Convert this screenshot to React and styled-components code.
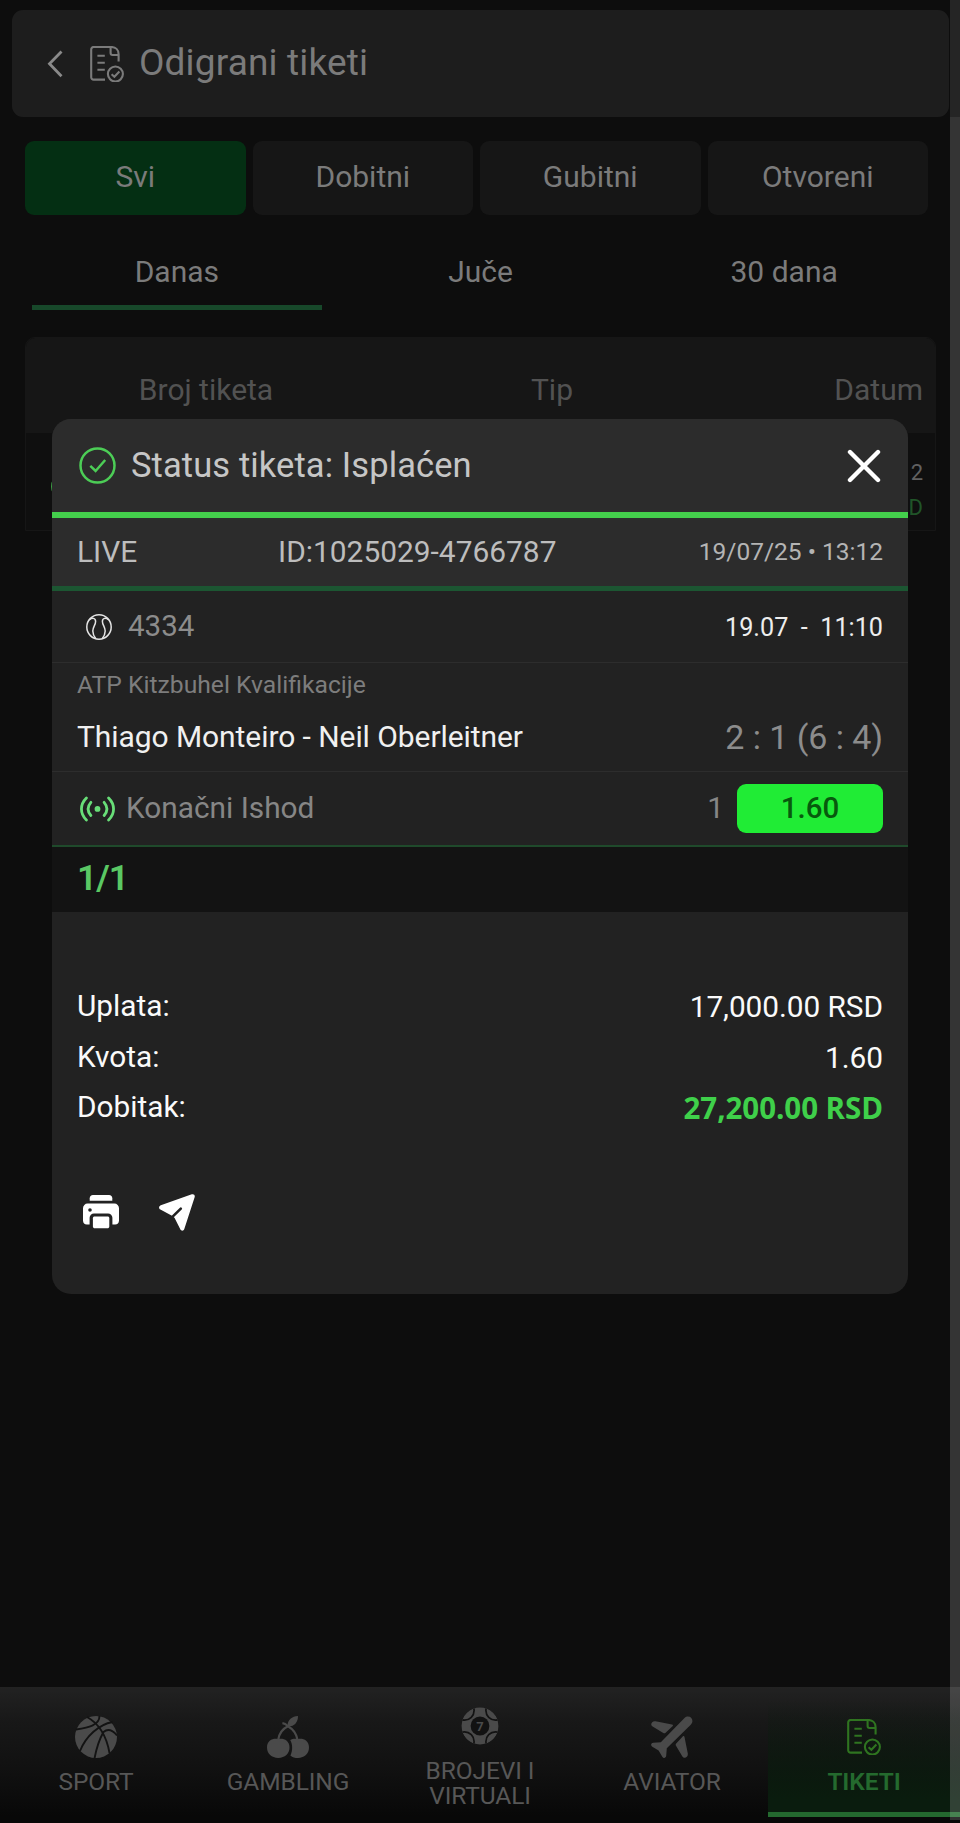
import React, { useState } from "react";
import styled, { createGlobalStyle, ThemeProvider } from "styled-components";

const theme = {
  page: "#0d0d0d",
  panel: "#1d1d1d",
  tile: "#161616",
  dimText: "#7b7b7b",
  headText: "#525252",
  green: "#44cf4c",
  darkGreen: "#1c5632",
  font: `Roboto, "Liberation Sans", sans-serif`,
};

const filters = ["Svi", "Dobitni", "Gubitni", "Otvoreni"];
const ranges = ["Danas", "Juče", "30 dana"];

const TicketIcon = () => (
  <svg width="34" height="36" viewBox="0 0 34 36" fill="none" stroke="currentColor" strokeWidth="2.1">
    <path d="M15 33.6H3.6a2.4 2.4 0 0 1-2.4-2.4V3.4A2.4 2.4 0 0 1 3.6 1h17.6c4.4 0 7.4 3 7.4 7.2v7.3" />
    <path d="M20.6 1v6a2 2 0 0 0 2 2h6" />
    <path d="M7.4 9.7h7.4M7.4 16.7h7.4M7.4 23.7h7.4" />
    <circle cx="25.4" cy="28" r="7.5" />
    <path d="M21.6 28.2l2.8 2.5 5-5.2" />
  </svg>
);

const CheckCircle = () => (
  <svg width="37" height="37" viewBox="0 0 37 37" fill="none" stroke="#4ccd56" strokeWidth="2.5">
    <circle cx="18.5" cy="18.5" r="17" />
    <path d="M11.3 18.8l5.3 5.2L26.2 13" />
  </svg>
);

const TennisIcon = () => (
  <svg width="26" height="26" viewBox="0 0 26 26" fill="none" stroke="#e4e4e4" strokeWidth="1.5">
    <circle cx="13" cy="13" r="12.2" />
    <path d="M3.2 6C6 3.6 9.6 3.6 9.6 7.4c0 3.4-2.8 5.8-2.8 9.6 0 3 1.4 5.6 3 7.8" />
    <path d="M22.8 6c-2.8-2.4-6.4-2.4-6.4 1.4 0 3.4 2.8 5.8 2.8 9.6 0 3-1.4 5.6-3 7.8" />
  </svg>
);

const LiveIcon = () => (
  <svg width="35" height="26" viewBox="0 0 35 26" fill="none" stroke="#68de78" strokeWidth="2.8" strokeLinecap="round">
    <path d="M6.4 1.9C-.2 8.4-.2 17.4 6.4 23.9M28.6 1.9c6.6 6.5 6.6 15.5 0 22" />
    <path d="M10.9 6.3c-3.6 4.2-3.6 9 0 13.2M24.1 6.3c3.6 4.2 3.6 9 0 13.2" />
    <circle cx="17.5" cy="12.9" r="2.9" fill="#68de78" stroke="none" />
  </svg>
);

const PrinterIcon = () => (
  <svg width="36" height="34" viewBox="0 0 36 34" fill="#fff">
    <path d="M6.7 5.8V3.2C6.7 1.4 8 0 9.9 0h16.2c1.9 0 3.2 1.4 3.2 3.2v2.6z" />
    <path
      fillRule="evenodd"
      d="M4.6 8.6h26.8a4.6 4.6 0 0 1 4.6 4.6v12.2c0 2.5-1.6 4-3.8 4h-2.8v-6.6a4.4 4.4 0 0 0-4.4-4.4H11a4.4 4.4 0 0 0-4.4 4.4v6.6H3.8c-2.2 0-3.8-1.5-3.8-4V13.2a4.6 4.6 0 0 1 4.6-4.6zM7 13.2a1.8 1.8 0 1 0 0 3.6 1.8 1.8 0 0 0 0-3.6z"
    />
    <path d="M9.9 23.2c0-.9.7-1.6 1.6-1.6h13.2c.9 0 1.6.7 1.6 1.6v8.2c0 1.1-.8 1.9-1.9 1.9H11.8c-1.1 0-1.9-.8-1.9-1.9z" />
  </svg>
);

const SendIcon = () => (
  <svg width="36" height="37" viewBox="0 0 36 37">
    <path
      fill="#fff"
      d="M1.8 11.2 32.8.3c2-.6 3.3.7 2.9 2.7L25.3 35c-.7 2.2-3 2.3-4 .3l-5.8-11.6-3-2.2L1.4 15.6c-1.9-.9-1.8-3.5.4-4.4z"
    />
    <path d="M12.6 23.6 21.8 14.6" stroke="#222" strokeWidth="2.6" strokeLinecap="round" />
  </svg>
);

const BallIcon = () => (
  <svg width="42" height="42" viewBox="0 0 42 42">
    <circle cx="21" cy="21" r="21" fill="#4a4a4a" />
    <g fill="none" stroke="#131313" strokeWidth="1.9">
      <path d="M12 1C22 6.5 31 17 34.5 37" />
      <path d="M24.5 0C24.5 9.5 13 11.5 1 13.5" />
      <path d="M37.5 6C24 8.5 11 20 5 35" />
      <path d="M42 19.5C37 13.5 32.5 12.8 28.5 16 24.5 23 21.5 32 19.6 42" />
    </g>
  </svg>
);

const CherryIcon = () => (
  <svg width="42" height="42" viewBox="0 0 42 42" fill="#4a4a4a">
    <path d="M20.4 10.5C20.4 3.5 25 .4 31 0c.2 6-3.8 11-10.6 10.5z" />
    <path
      d="M15.4 7.2c2 .3 3.8 1.3 5.6 3-5.6 2.6-9 7-9.9 14M21 10.2c5 2.9 8.6 7.3 9.6 14"
      fill="none"
      stroke="#4a4a4a"
      strokeWidth="2.2"
    />
    <path d="M11.2 23.2c4.2-1.2 11.3.4 11.3 8.4 0 6-4.6 10.4-11.2 10.4S0 37.6 0 31.6c0-8 7-9.6 11.2-8.4z" />
    <path d="M30.8 23.2C35 22 42 23.600 42 31.600 42 37.600 37.400 42 31 42c-3 0-5.600-.8-7.600-2.600 2.400-4.400 2.400-11.200-.2-15.400 2.200-1.200 5.200-1.600 7.600-.8z" />
  </svg>
);

const ChipIcon = () => (
  <svg width="38" height="38" viewBox="0 0 38 38">
    <clipPath id="chip">
      <circle cx="19" cy="19" r="18.4" />
    </clipPath>
    <g clipPath="url(#chip)" fill="#4a4a4a" stroke="#121212" strokeWidth="1.7">
      <rect width="38" height="38" stroke="none" />
      <circle cx="3.5" cy="3.5" r="9.6" />
      <circle cx="34.5" cy="3.5" r="9.6" />
      <circle cx="3.5" cy="34.5" r="9.6" />
      <circle cx="34.5" cy="34.5" r="9.6" />
    </g>
    <circle cx="19" cy="19" r="9.4" fill="#121212" />
    <text x="19" y="23.6" textAnchor="middle" fontFamily="Roboto, sans-serif" fontSize="13" fontWeight="700" fill="#4a4a4a">
      7
    </text>
  </svg>
);

const AirplaneIcon = () => (
  <svg width="42" height="42" viewBox="0 0 42 42" fill="#4a4a4a">
    <path d="M33.500 2C38.300-2.200 44.200 3.700 40 8.500L15.800 32.200l-.6 7.600c-.2 2.200-2.700 2.900-3.900.9l-3.700-6.300-6.300-3.700c-2-1.200-1.300-3.700.9-3.900l7.600-.6z" />
    <path d="M4.500 5.200 21 8.500c1 .2 1.300 1 .5 1.800L14.600 16.800c-.8.7-1.5.7-2.300.2L1.600 10.600C-1.300 8.800.8 4.600 4.500 5.200z" />
    <path d="M36.800 37.500 33.500 21c-.2-1-1-1.300-1.800-.5l-6.500 6.900c-.7.8-.7 1.5-.2 2.300l6.400 10.700c1.800 2.900 6 .8 5.400-2.900z" />
  </svg>
);

const navItems = [
  { label: "SPORT", icon: <BallIcon /> },
  { label: "GAMBLING", icon: <CherryIcon /> },
  { label: "BROJEVI I VIRTUALI", icon: <ChipIcon />, tall: true },
  { label: "AVIATOR", icon: <AirplaneIcon /> },
  { label: "TIKETI", icon: <TicketIcon />, active: true },
];

const summary = [
  { label: "Uplata:", value: "17,000.00 RSD" },
  { label: "Kvota:", value: "1.60" },
  { label: "Dobitak:", value: "27,200.00 RSD", win: true },
];

const App = () => {
  const [filter, setFilter] = useState("Svi");
  const [range, setRange] = useState("Danas");
  const [open, setOpen] = useState(true);

  return (
    <ThemeProvider theme={theme}>
      <GlobalStyle />
      <Page>
        <Content>
          <Header>
            <svg width="16" height="28" viewBox="0 0 16 28" fill="none" stroke="#8a8a8a" strokeWidth="2.8">
              <path d="M14.5 1.5 2.5 13.8l12 12.4" />
            </svg>
            <TicketIcon />
            <Title>Odigrani tiketi</Title>
          </Header>
          <Filters>
            {filters.map((name) => (
              <FilterButton key={name} $active={name === filter} onClick={() => setFilter(name)}>
                {name}
              </FilterButton>
            ))}
          </Filters>
          <Ranges>
            {ranges.map((name) => (
              <RangeTab key={name} $active={name === range} onClick={() => setRange(name)}>
                {name}
              </RangeTab>
            ))}
          </Ranges>
          <Table>
            <TableHead>
              <span>Broj tiketa</span>
              <span>Tip</span>
              <span>Datum</span>
            </TableHead>
            <TableRow>
              <CheckCircle />
              <RowInfo>
                <span>2</span>
                <RowWin>D</RowWin>
              </RowInfo>
            </TableRow>
          </Table>
        </Content>
        <BottomNav>
          {navItems.map(({ label, icon, active, tall }) => (
            <NavItem key={label} $active={active}>
              <NavIcon $tall={tall}>{icon}</NavIcon>
              <NavLabel $active={active}>{label}</NavLabel>
            </NavItem>
          ))}
        </BottomNav>
        {open && (
          <Modal>
            <ModalHeader>
              <CheckCircle />
              <ModalTitle>Status tiketa: Isplaćen</ModalTitle>
              <CloseButton onClick={() => setOpen(false)}>
                <svg width="34" height="34" viewBox="0 0 34 34" stroke="#fff" strokeWidth="4.4" strokeLinecap="round">
                  <path d="M3 3l28 28M31 3L3 31" />
                </svg>
              </CloseButton>
            </ModalHeader>
            <IdRow>
              <span>LIVE</span>
              <span>ID:1025029-4766787</span>
              <DateText>19/07/25 • 13:12</DateText>
            </IdRow>
            <EventRow>
              <TennisIcon />
              <Code>4334</Code>
              <EventDate>19.07&nbsp; -&nbsp; 11:10</EventDate>
            </EventRow>
            <Match>
              <League>ATP Kitzbuhel Kvalifikacije</League>
              <Players>
                <span>Thiago Monteiro - Neil Oberleitner</span>
                <Score>2 : 1 (6 : 4)</Score>
              </Players>
            </Match>
            <BetRow>
              <LiveIcon />
              <BetName>Konačni Ishod</BetName>
              <Pick>1</Pick>
              <Odd>1.60</Odd>
            </BetRow>
            <Count>1/1</Count>
            <Summary>
              {summary.map(({ label, value, win }) => (
                <SummaryRow key={label}>
                  <span>{label}</span>
                  <SummaryValue $win={win}>{value}</SummaryValue>
                </SummaryRow>
              ))}
            </Summary>
            <Actions>
              <PrinterIcon />
              <SendIcon />
            </Actions>
          </Modal>
        )}
        <ScrollTrack>
          <ScrollThumb />
        </ScrollTrack>
      </Page>
    </ThemeProvider>
  );
};

export default App;

const GlobalStyle = createGlobalStyle`
  * {
    box-sizing: border-box;
  }
  body {
    margin: 0;
    background: ${theme.page};
    font-family: ${theme.font};
  }
  svg {
    display: block;
    flex-shrink: 0;
  }
`;

const Page = styled.div`
  position: relative;
  display: flex;
  flex-direction: column;
  width: 960px;
  height: 1823px;
  overflow: hidden;
  background: ${(props) => props.theme.page};
  color: ${(props) => props.theme.dimText};
`;

const Content = styled.div`
  flex: 1;
  padding: 10px 11px 0 12px;
`;

const Header = styled.div`
  display: flex;
  align-items: center;
  height: 107px;
  padding: 0 36px 0 35px;
  gap: 27px;
  border-radius: 11px;
  background: ${(props) => props.theme.panel};
`;

const Title = styled.h1`
  margin: 0 0 0 -12px;
  padding-bottom: 2px;
  font-size: 37px;
  font-weight: 400;
  letter-spacing: 0.15px;
`;

const Filters = styled.div`
  display: grid;
  grid-template-columns: repeat(4, 1fr);
  gap: 7px;
  padding: 24px 21px 0 13px;
`;

const FilterButton = styled.button`
  height: 74px;
  padding: 0 0 3px;
  border: none;
  border-radius: 9px;
  background: ${(props) => (props.$active ? "#042f13" : props.theme.tile)};
  color: inherit;
  font-family: inherit;
  font-size: 30px;
`;

const Ranges = styled.div`
  display: grid;
  grid-template-columns: repeat(3, 1fr);
  height: 95px;
  padding: 0 13px;
`;

const RangeTab = styled.div`
  height: 95px;
  margin: 0 7px;
  padding-top: 18px;
  border-bottom: 5px solid ${(props) => (props.$active ? "#17482a" : "transparent")};
  font-size: 30px;
  line-height: 77px;
  text-align: center;
`;

const Table = styled.div`
  margin: 27px 13px 0 13px;
  border: 1px solid ${(props) => props.theme.tile};
  border-radius: 10px 10px 0 0;
`;

const TableHead = styled.div`
  display: grid;
  grid-template-columns: 360px 1fr 210px;
  align-items: center;
  height: 95px;
  padding: 7px 12px 0 0;
  border-radius: 9px 9px 0 0;
  background: ${(props) => props.theme.tile};
  color: ${(props) => props.theme.headText};
  font-size: 30px;
  text-align: center;
  span:nth-child(2) {
    padding-left: 5px;
  }
  span:last-child {
    text-align: right;
  }
`;

const TableRow = styled.div`
  display: flex;
  align-items: center;
  justify-content: space-between;
  height: 97px;
  padding: 10px 12px 0 25px;
  background: #0f0f0f;
`;

const RowInfo = styled.div`
  display: flex;
  flex-direction: column;
  padding-top: 6px;
  font-size: 22px;
  line-height: 35px;
  text-align: right;
  color: #616161;
`;

const RowWin = styled.span`
  color: #205428;
`;

const BottomNav = styled.div`
  display: grid;
  grid-template-columns: repeat(5, 192px);
  height: 136px;
  padding-bottom: 6px;
  background: linear-gradient(#222, #181818 25%, #111 60%, #080808 95%);
`;

const NavItem = styled.div`
  display: flex;
  flex-direction: column;
  align-items: center;
  justify-content: center;
  padding-top: 10px;
  border-bottom: 5px solid ${(props) => (props.$active ? "#24692f" : "transparent")};
  background: ${(props) => (props.$active ? "linear-gradient(transparent 10%, #0a1c0e 90%)" : "none")};
  color: ${(props) => (props.$active ? "#2f7420" : "#4a4a4a")};
`;

const NavIcon = styled.div`
  display: flex;
  align-items: center;
  justify-content: center;
  height: ${(props) => (props.$tall ? "38px" : "42px")};
  margin-top: ${(props) => (props.$tall ? "5px" : "0")};
  margin-bottom: ${(props) => (props.$tall ? "13px" : "11px")};
`;

const NavLabel = styled.span`
  max-width: 150px;
  color: ${(props) => (props.$active ? "#246a2e" : "#575757")};
  font-size: 24.5px;
  font-weight: ${(props) => (props.$active ? 600 : 400)};
  line-height: 25px;
  text-align: center;
  letter-spacing: -0.1px;
`;

const Modal = styled.div`
  position: absolute;
  top: 419px;
  left: 52px;
  width: 856px;
  height: 875px;
  overflow: hidden;
  border-radius: 19px;
  background: #222;
`;

const ModalHeader = styled.div`
  display: flex;
  align-items: center;
  height: 99px;
  padding: 0 27px;
  border-bottom: 6px solid ${(props) => props.theme.green};
  background: #2c2c2c;
  color: #c6c6c6;
`;

const ModalTitle = styled.h2`
  flex: 1;
  margin: 0 0 0 15px;
  padding-bottom: 1px;
  font-size: 34.5px;
  font-weight: 400;
  letter-spacing: 0.1px;
`;

const CloseButton = styled.button`
  padding: 0;
  border: none;
  background: none;
`;

const IdRow = styled.div`
  display: grid;
  grid-template-columns: 201px 1fr auto;
  align-items: center;
  height: 73px;
  padding: 0 25px 2px;
  border-bottom: 5px solid ${(props) => props.theme.darkGreen};
  background: #2c2c2c;
  color: #bdbdbd;
  font-size: 29.9px;
`;

const DateText = styled.span`
  padding-top: 1px;
  color: #b4b4b4;
  font-size: 24.5px;
`;

const EventRow = styled.div`
  display: flex;
  align-items: center;
  height: 72px;
  padding: 0 25px 0 34px;
  border-bottom: 1px solid #2d2d2d;
`;

const Code = styled.span`
  flex: 1;
  margin-left: 16px;
  padding-bottom: 1px;
  color: #8c8c8c;
  font-size: 29.5px;
`;

const EventDate = styled.span`
  padding-top: 1px;
  color: #ededed;
  font-size: 25.2px;
`;

const Match = styled.div`
  height: 109px;
  padding: 0 25px;
  border-bottom: 1px solid #2d2d2d;
`;

const League = styled.div`
  padding-top: 7px;
  color: #7d7d7d;
  font-size: 24.7px;
  line-height: 30px;
`;

const Players = styled.div`
  display: flex;
  align-items: center;
  justify-content: space-between;
  height: 73px;
  color: #f0f0f0;
  font-size: 30px;
  letter-spacing: -0.07px;
`;

const Score = styled.span`
  color: #8c8c8c;
  font-size: 34px;
`;

const BetRow = styled.div`
  display: flex;
  align-items: center;
  height: 75px;
  padding: 0 25px 0 28px;
  border-bottom: 2px solid #1f4a2b;
  color: #868686;
  font-size: 29.8px;
`;

const BetName = styled.span`
  flex: 1;
  margin-left: 11px;
  padding-bottom: 2px;
`;

const Pick = styled.span`
  margin-right: 13px;
  padding-bottom: 2px;
`;

const Odd = styled.span`
  width: 146px;
  border-radius: 9px;
  background: #20ec35;
  color: #075a0d;
  font-weight: 500;
  font-size: 29.5px;
  line-height: 49px;
  text-align: center;
`;

const Count = styled.div`
  height: 65px;
  padding-left: 25px;
  background: #131313;
  color: #5ac864;
  font-size: 35.5px;
  font-weight: 600;
  line-height: 63px;
  letter-spacing: -1px;
`;

const Summary = styled.div`
  padding: 68px 25px 0;
`;

const SummaryRow = styled.div`
  display: flex;
  justify-content: space-between;
  height: 50.5px;
  color: #fafafa;
  font-size: 29.8px;
  line-height: 51px;
`;

const SummaryValue = styled.span`
  padding-top: 1px;
  letter-spacing: -0.05px;
  ${(props) =>
    props.$win &&
    `
    color: #3fd04a;
    font-family: "Open Sans", sans-serif;
    font-size: 29.5px;
    font-weight: 700;
  `}
`;

const Actions = styled.div`
  display: flex;
  align-items: center;
  gap: 40px;
  padding: 62px 31px 0;
`;

const ScrollTrack = styled.div`
  position: absolute;
  top: 0;
  right: 0;
  width: 10px;
  height: 1820px;
  padding-top: 117px;
  background: rgba(255, 255, 255, 0.1);
`;

const ScrollThumb = styled.div`
  height: 100%;
  background: rgba(255, 255, 255, 0.07);
`;
